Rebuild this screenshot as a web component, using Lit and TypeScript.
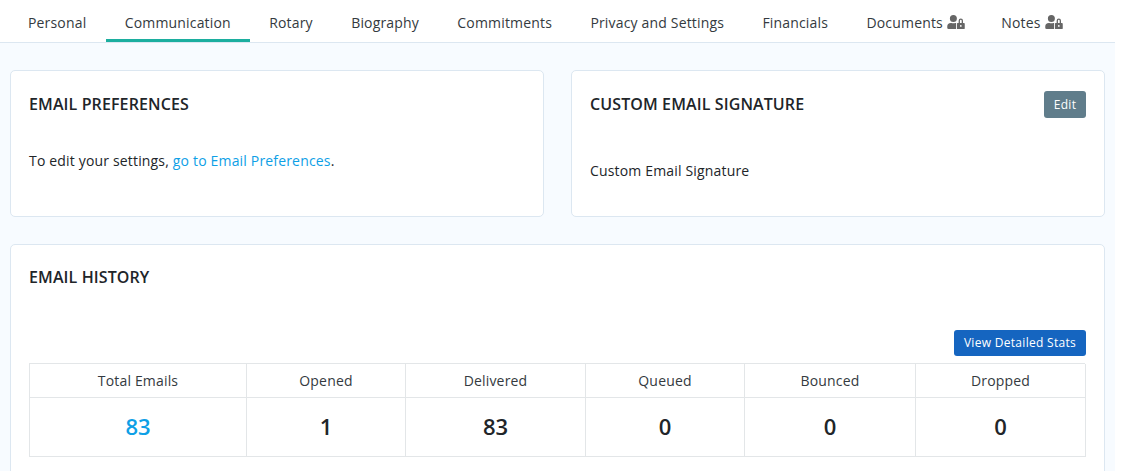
import { LitElement, html, css, svg } from "lit";
import { customElement } from "lit/decorators.js";

const lock = svg`<path d="M224 256A128 128 0 1 0 96 128a128 128 0 0 0 128 128zm96 64a63.08 63.08 0 0 1 8.1-30.5c-4.8-.5-9.5-1.5-14.5-1.5h-16.7a174.08 174.08 0 0 1-145.8 0h-16.7A134.43 134.43 0 0 0 0 422.4V464a48 48 0 0 0 48 48h280.9a63.54 63.54 0 0 1-8.9-32zm288-32h-32v-80a80 80 0 0 0-160 0v80h-32a32 32 0 0 0-32 32v160a32 32 0 0 0 32 32h224a32 32 0 0 0 32-32V320a32 32 0 0 0-32-32zM496 432a32 32 0 1 1 32-32 32 32 0 0 1-32 32zm32-144h-64v-80a32 32 0 0 1 64 0z"/>`;

const tabs = [
  { label: "Personal" },
  { label: "Communication", active: true },
  { label: "Rotary" },
  { label: "Biography" },
  { label: "Commitments" },
  { label: "Privacy and Settings" },
  { label: "Financials" },
  { label: "Documents", locked: true },
  { label: "Notes", locked: true },
];

const stats = [
  { label: "Total Emails", value: "83", link: true },
  { label: "Opened", value: "1" },
  { label: "Delivered", value: "83" },
  { label: "Queued", value: "0" },
  { label: "Bounced", value: "0" },
  { label: "Dropped", value: "0" },
];

@customElement("app-root")
export class AppRoot extends LitElement {
  static styles = css`
    :host {
      display: block;
      width: 1115px;
      height: 471px;
      overflow: hidden;
      background: #f7fbff;
      font-family: "Open Sans", sans-serif;
      font-size: 14px;
      line-height: 21px;
      letter-spacing: 0.17px;
      color: #212529;
    }
    * { box-sizing: border-box; }
    .tabs {
      display: flex;
      height: 43px;
      padding-left: 8.8px;
      background: #fff;
      border-bottom: 1px solid #dce7f1;
    }
    .tab {
      display: flex;
      align-items: flex-start;
      gap: 4px;
      padding: 12px 19.2px 0;
      height: 42px;
      white-space: nowrap;
      color: #343a40;
    }
    .tab.active { border-bottom: 3px solid #1cae9f; }
    .tab svg { width: 18px; height: 14px; fill: #666; margin: 3px -2px 0 0; }
    .content { padding: 27px 10px 0; }
    .row { display: flex; gap: 27px; margin-bottom: 27px; }
    .card {
      background: #fff;
      border: 1px solid #dce7f1;
      border-radius: 5px;
      padding: 20px 18px;
    }
    .row .card { width: 534px; height: 147px; }
    .head { display: flex; justify-content: space-between; align-items: flex-start; }
    h2 {
      margin: 1px 0 0;
      font-size: 16px;
      line-height: 24px;
      font-weight: 600;
      letter-spacing: 0.11px;
      color: #212529;
      text-transform: uppercase;
    }
    p { margin: 0; }
    .pref { margin-top: 34px; }
    .sig { margin-top: 42px; }
    a { color: #0ea0e6; text-decoration: none; }
    .btn {
      border: 0;
      font: inherit;
      font-size: 12px;
      line-height: 18px;
      letter-spacing: 0.3px;
      color: #fff;
      border-radius: 3px;
      white-space: nowrap;
    }
    .edit { background: #607d8b; padding: 4px 0; height: 27px; width: 42px; text-align: center; }
    .history { height: 260px; }
    .history h2 { margin-top: 0; }
    .tools { display: flex; justify-content: flex-end; margin-top: 41px; margin-bottom: 7px; }
    .view { background: #1565c0; width: 132px; height: 26px; padding: 4px 0; text-align: center; }
    .grid {
      display: grid;
      grid-template-columns: 217px 159px 180px 159px 171px 170px;
      grid-template-rows: 34px 59px;
      border-left: 1px solid #e3e6e8;
      border-top: 1px solid #e3e6e8;
      width: 1056px;
    }
    .cell {
      display: flex;
      align-items: center;
      justify-content: center;
      border-right: 1px solid #e3e6e8;
      border-bottom: 1px solid #e3e6e8;
      color: #343a40;
    }
    .num { font-size: 22px; font-weight: 600; letter-spacing: 0; color: #212529; padding-bottom: 2px; }
    .num.link { color: #0ea0e6; }
  `;

  render() {
    return html`
      <nav class="tabs">
        ${tabs.map(
          (t) => html`<div class="tab ${t.active ? "active" : ""}">
            <span>${t.label}</span>
            ${t.locked ? html`<svg viewBox="0 0 640 512">${lock}</svg>` : ""}
          </div>`
        )}
      </nav>
      <div class="content">
        <div class="row">
          <section class="card">
            <div class="head"><h2>Email Preferences</h2></div>
            <p class="pref">To edit your settings, <a href="#">go to Email Preferences</a>.</p>
          </section>
          <section class="card">
            <div class="head">
              <h2>Custom Email Signature</h2>
              <button class="btn edit">Edit</button>
            </div>
            <p class="sig">Custom Email Signature</p>
          </section>
        </div>
        <section class="card history">
          <div class="head"><h2>Email History</h2></div>
          <div class="tools"><button class="btn view">View Detailed Stats</button></div>
          <div class="grid">
            ${stats.map((s) => html`<div class="cell">${s.label}</div>`)}
            ${stats.map(
              (s) => html`<div class="cell num ${s.link ? "link" : ""}">${s.value}</div>`
            )}
          </div>
        </section>
      </div>
    `;
  }
}
